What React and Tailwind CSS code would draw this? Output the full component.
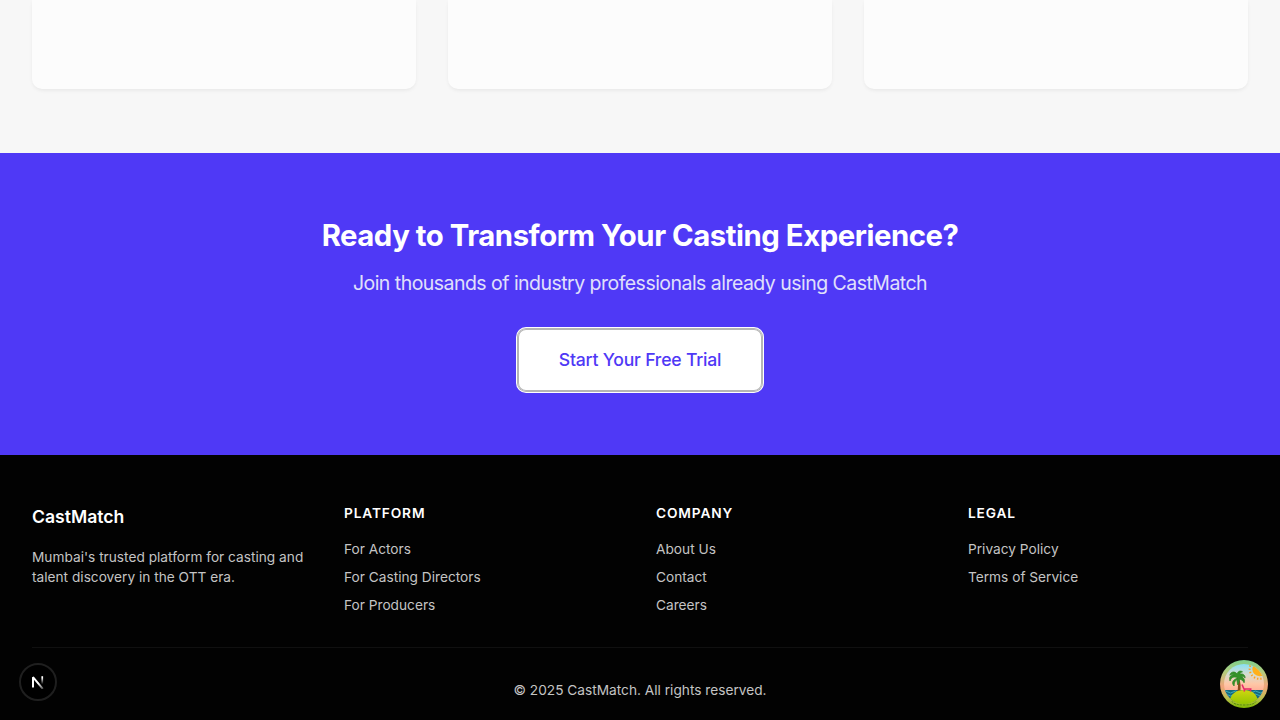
const columns = [
  { title: 'Platform', links: ['For Actors', 'For Casting Directors', 'For Producers'] },
  { title: 'Company', links: ['About Us', 'Contact', 'Careers'] },
  { title: 'Legal', links: ['Privacy Policy', 'Terms of Service'] },
];

function NextBadge() {
  return (
    <div className="absolute left-[19px] top-[663px] flex size-[38px] items-center justify-center rounded-full border-2 border-[#1f1f1f] bg-black">
      <svg width="14" height="14" viewBox="0 0 14 14" fill="none">
        <defs>
          <linearGradient id="stem" x1="0" y1="0" x2="0" y2="1">
            <stop offset="0.2" stopColor="#fff" />
            <stop offset="1" stopColor="#fff" stopOpacity="0" />
          </linearGradient>
          <linearGradient id="slash" x1="8" y1="8" x2="12" y2="14" gradientUnits="userSpaceOnUse">
            <stop stopColor="#fff" />
            <stop offset="1" stopColor="#fff" stopOpacity="0.3" />
          </linearGradient>
        </defs>
        <path d="M2 12.600V2.200L11.800 13.800" stroke="url(#slash)" strokeWidth="2" strokeLinejoin="bevel" />
        <rect x="10.400" y="1.200" width="1.700" height="8" fill="url(#stem)" />
      </svg>
    </div>
  );
}

function IslandBadge() {
  return (
    <svg className="absolute left-[1220px] top-[660px]" width="48" height="48" viewBox="0 0 48 48">
      <defs>
        <linearGradient id="rim" x1="0" y1="0" x2="0" y2="1">
          <stop offset="0" stopColor="#7ccf8e" />
          <stop offset="0.25" stopColor="#b3cc7c" />
          <stop offset="0.55" stopColor="#f2a47c" />
          <stop offset="0.8" stopColor="#b8bf4e" />
          <stop offset="1" stopColor="#7fb800" />
        </linearGradient>
        <linearGradient id="sky" x1="0" y1="0" x2="0" y2="1">
          <stop offset="0.08" stopColor="#86dff5" />
          <stop offset="0.3" stopColor="#d6dccf" />
          <stop offset="0.5" stopColor="#ffc7a6" />
          <stop offset="0.75" stopColor="#ff9c8c" />
        </linearGradient>
        <linearGradient id="isle" x1="0" y1="0" x2="0" y2="1">
          <stop offset="0" stopColor="#d0d610" />
          <stop offset="1" stopColor="#8fc400" />
        </linearGradient>
        <clipPath id="scene"><circle cx="24" cy="24" r="20" /></clipPath>
      </defs>
      <circle cx="24" cy="24" r="24" fill="url(#rim)" />
      <g clipPath="url(#scene)">
        <rect width="48" height="48" fill="url(#sky)" />
        <circle cx="39.500" cy="9" r="7.200" fill="#ffb01a" />
        <circle cx="39.500" cy="9" r="9.800" fill="none" stroke="#ff9f1a" strokeWidth="2" strokeDasharray="1.300 2" />
        <rect y="30" width="48" height="12" fill="#16687f" />
        <path d="M3 32q2.500-2 5 0t5 0 5 0 5 0 5 0 5 0 5 0 5 0M3 35q2.500-2 5 0t5 0 5 0 5 0 5 0 5 0 5 0 5 0" fill="none" stroke="#3db6bf" strokeWidth="0.9" />
        <path d="M17 33c1.600-5.500 1.300-10-.5-15l2.400-.5c1.900 5 2.300 10 1 15.500z" fill="#8a4a1c" />
        <path d="M3 44q3-6 9-6h24q6 0 9 6z" fill="#8fbf1c" />
        <path d="M9.500 41Q12 30 24 30T38 41Q32 45 24 45T9.500 41z" fill="url(#isle)" />
      </g>
      <path d="M18 18c-4-2-6.500-1-8 3-1.400-4 .7-6.300 4.300-6-1.700-1-3-.8-4.500.2 1-3.500 4.700-4.500 7.400-1.200.5-2.700 3-3.700 5.300-2.200-1.500.4-2.400 1.200-2.700 2.500 3-1.200 5.500.7 5.300 3.700-1.200-1.500-2.500-1.800-4-1.200 3 .7 4 3 3 6-1-2.500-3-3.500-5-3.500.5 2 0 4-1.500 5.500-.2-2-.4-3.500-1-5.300-1.700 1.500-2.500 3.500-2.500 6.500-3-3-1.500-6.500 3.900-8z" fill="#349229" stroke="#2c8424" strokeWidth="0.7" />
      <path d="M22 24.500l2 4.500h7.500M24 31.500l.8-2M30.500 31.500v-2" fill="none" stroke="#e62a6a" strokeWidth="1.600" />
      <path d="M12 41.500q2 3.500 12 3.500t12-3.500" fill="none" stroke="#4f8706" strokeWidth="0.900" strokeDasharray="2 1" />
    </svg>
  );
}

export default function App() {
  return (
    <div className="relative h-[720px] w-full overflow-hidden bg-[#f7f7f7] font-['Inter',sans-serif]">
      <section className="grid h-[153px] grid-cols-3 gap-8 px-8 pb-16">
        {[0, 1, 2].map((card) => (
          <div key={card} className="h-[89px] rounded-b-[10px] bg-[#fcfcfc] shadow-[0_2px_4px_-1px_rgba(0,0,0,0.08)]" />
        ))}
      </section>

      <section className="flex h-[302px] flex-col items-center bg-[#4f39f6] py-16 text-center">
        <h2 className="h-9 pt-px text-[29.3px] leading-9 font-bold tracking-[-0.46px] whitespace-nowrap text-white">Ready to Transform Your Casting Experience?</h2>
        <p className="mt-4 text-[19.5px] leading-7 tracking-[-0.53px] whitespace-nowrap text-[#e0e0fb]">Join thousands of industry professionals already using CastMatch</p>
        <button className="mt-8 h-[62px] w-[244px] rounded-lg bg-white text-[17.6px] leading-7 font-medium tracking-[-0.2px] whitespace-nowrap text-[#4f39f6] shadow-[inset_0_0_0_1px_#b5b5b5,0_0_0_1px_#b5b5b5,0_0_0_2px_#fff]">
          Start Your Free Trial
        </button>
      </section>

      <footer className="h-[265px] bg-[#020202] px-8 pt-12 text-[13.7px] leading-5 text-[#c4c4c4]">
        <div className="grid h-28 grid-cols-4 gap-8">
          <div>
            <h3 className="text-[17.6px] leading-7 font-semibold text-white">CastMatch</h3>
            <p className="mt-4 whitespace-nowrap">
              Mumbai's trusted platform for casting and
              <br />
              talent discovery in the OTT era.
            </p>
          </div>
          {columns.map((column) => (
            <div key={column.title}>
              <h4 className="font-semibold tracking-[0.86px] text-white uppercase">{column.title}</h4>
              <ul className="mt-4 space-y-2">
                {column.links.map((link) => (
                  <li key={link}>{link}</li>
                ))}
              </ul>
            </div>
          ))}
        </div>
        <div className="mt-8 border-t border-[#101010] pt-8 text-center">© 2025 CastMatch. All rights reserved.</div>
      </footer>

      <NextBadge />
      <IslandBadge />
    </div>
  );
}
